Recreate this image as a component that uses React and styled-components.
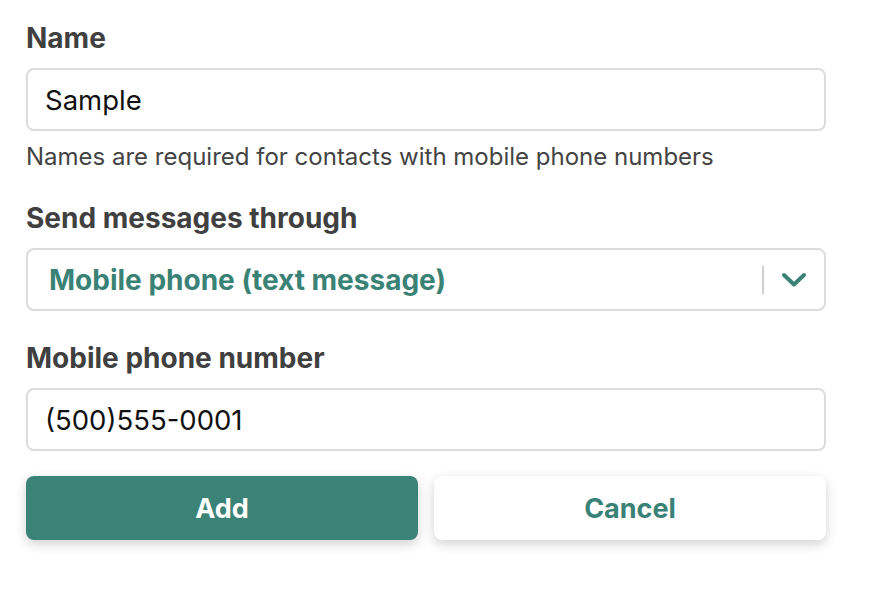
import React from "react";
import styled, { createGlobalStyle } from "styled-components";

const Global = createGlobalStyle`
  html, body { margin: 0; padding: 0; background: #fff; }
  body { font-family: Inter, "Liberation Sans", Arial, sans-serif; min-height: 598px; }
  * { box-sizing: border-box; }
`;

const Form = styled.form`
  width: 800px;
  margin-left: 26px;
  padding-top: 23px;
  padding-bottom: 50px;
  display: flex;
  flex-direction: column;
`;

const Label = styled.label`
  display: block;
  font-size: 28px;
  line-height: 30px;
  font-weight: 700;
  color: #404040;
  margin-top: ${(p) => p.$top || 0}px;
  margin-bottom: 15px;
`;

const TextInput = styled.input`
  width: 100%;
  height: 63px;
  border: 2px solid #dcdcdc;
  border-radius: 8px;
  padding: 0 17px;
  font-family: inherit;
  font-size: 27.5px;
  color: #111;
  background: #fff;
  outline: none;
`;

const Help = styled.div`
  margin-top: 13px;
  font-size: 24px;
  line-height: 26px;
  color: #444;
`;

const Select = styled.div`
  height: 63px;
  border: 2px solid #dcdcdc;
  border-radius: 8px;
  display: flex;
  align-items: center;
  padding-left: 21px;
  color: #3a8276;
  font-size: 28px;
  font-weight: 700;
`;

const SelectValue = styled.span`
  flex: 1;
`;

const Divider = styled.span`
  width: 2px;
  height: 28px;
  background: #cfcfcf;
`;

const Chevron = styled.span`
  width: 60px;
  display: flex;
  justify-content: center;
  align-items: center;
`;

const Buttons = styled.div`
  margin-top: 25px;
  display: grid;
  grid-template-columns: 1fr 1fr;
  gap: 16px;
`;

const Button = styled.button`
  height: 64px;
  border: none;
  border-radius: 8px;
  font-family: inherit;
  font-size: 27px;
  font-weight: 700;
  background: ${(p) => (p.$primary ? "#3b8376" : "#fff")};
  color: ${(p) => (p.$primary ? "#fff" : "#3a8276")};
  box-shadow: 0 4px 12px rgba(0, 0, 0, 0.18);
  cursor: pointer;
`;

export default function App() {
  return (
    <>
      <Global />
      <Form onSubmit={(e) => e.preventDefault()}>
        <Label>Name</Label>
        <TextInput defaultValue="Sample" />
        <Help>Names are required for contacts with mobile phone numbers</Help>
        <Label $top={33}>Send messages through</Label>
        <Select>
          <SelectValue>Mobile phone (text message)</SelectValue>
          <Divider />
          <Chevron>
            <svg width="26" height="16" viewBox="0 0 26 16" fill="none">
              <path d="M3 3 L13 12.5 L23 3" stroke="#3a8276" strokeWidth="4" strokeLinecap="round" strokeLinejoin="round" />
            </svg>
          </Chevron>
        </Select>
        <Label $top={32}>Mobile phone number</Label>
        <TextInput defaultValue="(500)555-0001" />
        <Buttons>
          <Button $primary type="submit">Add</Button>
          <Button type="button">Cancel</Button>
        </Buttons>
      </Form>
    </>
  );
}
